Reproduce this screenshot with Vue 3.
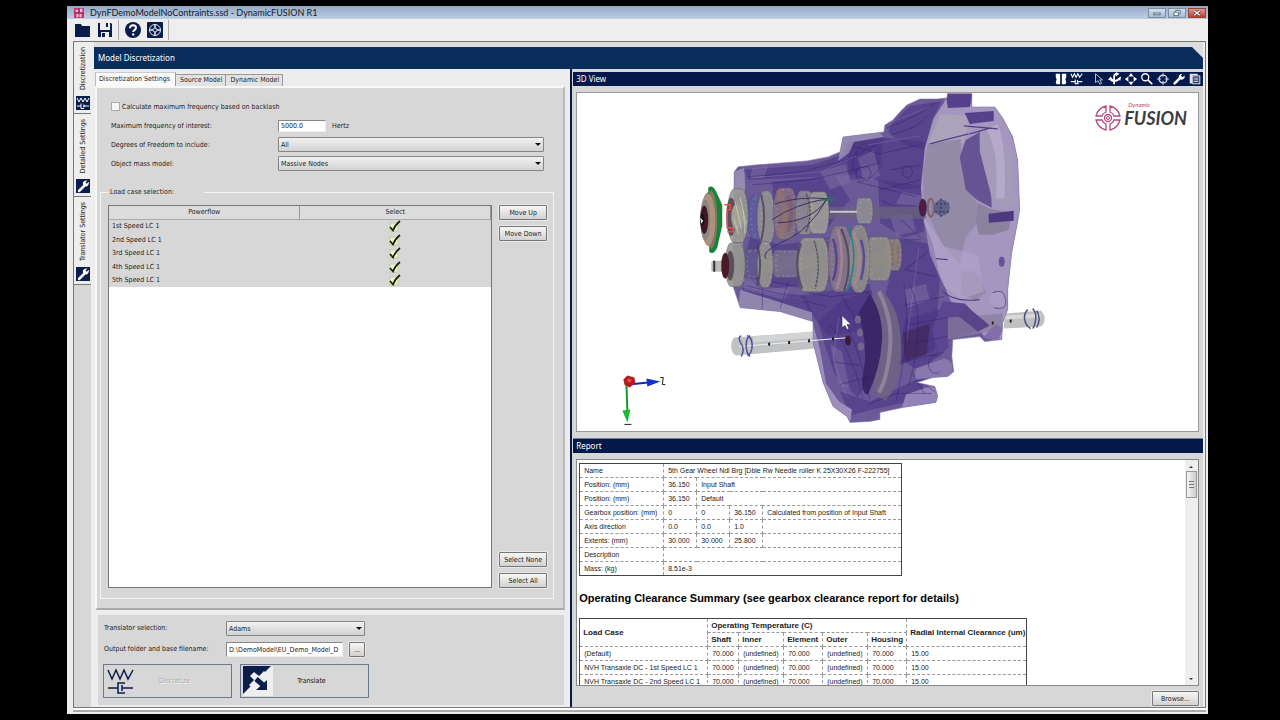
<script setup>
import { ref } from 'vue'

const sideTabs = [
  { label: 'Discretization', icon: 'spring' },
  { label: 'Detailed Settings', icon: 'wrench' },
  { label: 'Translator Settings', icon: 'wrench' },
]
const pageTabs = ['Discretization Settings', 'Source Model', 'Dynamic Model']
const loadCases = ['1st Speed LC 1', '2nd Speed LC 1', '3rd Speed LC 1', '4th Speed LC 1', '5th Speed LC 1']
const frequency = ref('5000.0')
const output = ref('D:\\DemoModel\\EU_Demo_Model_D')

const details = [
  ['Name', ['5th Gear Wheel Ndl Brg [Dble Rw Needle roller K 25X30X26 F-222755]', 4]],
  ['Position: (mm)', ['36.150', 1], ['Input Shaft', 3]],
  ['Position: (mm)', ['36.150', 1], ['Default', 3]],
  ['Gearbox position: (mm)', ['0', 1], ['0', 1], ['36.150', 1], ['Calculated from position of Input Shaft', 1]],
  ['Axis direction', ['0.0', 1], ['0.0', 1], ['1.0', 1], ['', 1]],
  ['Extents: (mm)', ['30.000', 1], ['30.000', 1], ['25.800', 1], ['', 1]],
  ['Description', ['', 4]],
  ['Mass: (kg)', ['8.51e-3', 4]],
]
const clearances = ['(Default)', 'NVH Transaxle DC - 1st Speed LC 1', 'NVH Transaxle DC - 2nd Speed LC 1']
const temps = ['70.000', '(undefined)', '70.000', '(undefined)', '70.000', '15.00']

const housing = 'M734 172L738 167L757 165L807 161L828 157L840 152L843 137L884 132L885 125L893 120L900 112L907 105L920 99L937 99L947 98L948 93H972V107H995L1003 118L1013 137L1018 160L1020 210L1017 227L1012 253L1008 290V310L1003 323L1002 340L985 342L980 337L953 340L952 357L954 372L948 377L933 378L917 383L935 387L938 397L936 403L903 408L880 413V420L870 422L850 423L847 417L833 407L823 383L818 363L813 343V322L780 312L740 308L733 287Z'

/* gear drums: left edge, right edge, centre y, half height, tint */
const gears = [
  [747, 760, 217, 22, '#5d5b9c'], [727, 748, 216, 27, '#98978f'], [757, 775, 218, 27, '#918f94'],
  [773, 797, 214, 26, '#857083'], [795, 814, 213, 22, '#8b8791'], [808, 829, 213, 21, '#9c9c96'],
  [856, 873, 211, 13, '#8e8d93'],
  [743, 760, 264, 15, '#5f588e'], [725, 745, 265, 22, '#94938c'], [772, 800, 264, 14, '#746f8d'], [757, 773, 265, 23, '#95938f'],
  [820, 846, 260, 22, '#5a4d8e'], [797, 829, 265, 27, '#96958d'], [828, 852, 259, 33, '#86748b'],
  [884, 902, 255, 16, '#89807a'], [866, 892, 259, 22, '#8f8e86'], [848, 870, 259, 34, '#8d8b88'],
]
function drum([a, b, y, h]) {
  const r = Math.round(h / 4)
  return `M${a + r} ${y - h}H${b - r}A${r} ${h} 0 0 1 ${b - r} ${y + h}H${a + r}A${r} ${h} 0 0 1 ${a + r} ${y - h}Z`
}
/* darker facets of the translucent casting */
const facets = [
  'M742 170L812 165L842 155L850 142L884 137L880 165L850 175L800 178L748 180Z',
  'M740 235L780 245L820 240L810 285L760 290L742 270Z', 'M742 288L806 296L812 314L782 304L746 301Z',
  'M846 143L880 137L925 142L924 188L900 190L872 178L850 180Z', 'M893 122L910 106L942 101L932 120L925 150L905 145L888 132Z',
  'M878 180L922 186L924 232L904 238L880 223Z', 'M900 238L928 244L940 280L935 350L900 366L884 300Z',
  'M818 322L842 300L872 290L876 370L858 398L835 376L825 346Z', 'M840 392L870 402L925 376L922 400L872 410L850 416Z',
  'M905 320L940 310L949 348L920 372L898 358Z', 'M800 296L870 284L872 330L828 336L814 318Z', 'M772 182L835 176L850 200L826 230L774 226Z',
]
const patches = [
  'M736 174L746 172L744 196L750 236L744 262L736 258Z', 'M752 168L768 166L764 178L750 178Z', 'M858 158L874 150L880 176L864 182Z',
  'M890 216L912 214L916 232L896 236Z', 'M744 262L760 286L790 290L784 300L744 290Z', 'M830 344L842 352L850 390L838 384Z',
  'M902 192L922 196L920 206L896 204Z', 'M904 290L926 284L930 300L908 308Z', 'M820 172L846 164L850 182L830 190Z',
]
const shade = [
  'M748 177L801 172L846 160L876 145M752 185L810 180L849 171L883 162M862 143Q846 166 858 176T882 164M852 146L880 154L919 145M887 128Q919 116 935 103M891 135Q917 129 928 116M857 182L917 197M880 190L921 180M882 201L924 221M890 170L922 165',
  'M742 276L808 289M746 286L827 307M762 310L763 276M780 309L788 282M807 293L831 297L870 292M842 297L855 318M829 325Q850 346 863 399M839 315Q858 339 870 401M831 362L860 366M840 385L875 376',
  'M904 285Q912 330 896 402M910 285Q927 320 909 386M903 306L944 297M909 325L948 318M909 344L948 337M899 363L944 353M912 373L925 395M868 405L896 394L932 394M928 252L905 270L937 277M921 240L904 240M901 220L924 240',
  'M907 166a5 6 0 1 0 1 12a5 6 0 1 0 -1 -12M863 168a5 7 0 1 0 1 12a5 7 0 1 0 -1 -12M939 357a7 9 0 1 0 1 15M924 384L936 393',
]
const axisBeads = [769, 789, 809, 833]
</script>

<template>
  <div class="desktop">
    <main class="window">
      <header class="titlebar">
        <svg class="appicon" viewBox="0 0 12 12" aria-hidden="true"><rect width="12" height="12" fill="#c8386f" /><path d="M2 2h3v3H2zM7 1h3v4H7zM3 7h6v4H3z" fill="#f3c4d6" /><path d="M6 0v12M0 6h12" stroke="#8d1d49" /></svg>
        <h1>DynFDemoModelNoContraints.ssd - DynamicFUSION R1</h1>
        <div class="winbtns">
          <button aria-label="Minimize"><svg viewBox="0 0 16 9"><rect x="4.500" y="4.500" width="7" height="2" fill="#fff" stroke="#4b5b6e" /></svg></button>
          <button aria-label="Restore"><svg viewBox="0 0 16 9"><path d="M6.500 3V1.500h5v4H10M4.500 3.500h5v4h-5z" fill="#fff" stroke="#4b5b6e" /></svg></button>
          <button class="close" aria-label="Close"><svg viewBox="0 0 16 9"><path d="M5 2l6 5M11 2L5 7" stroke="#5a3733" stroke-width="3" /><path d="M5 2l6 5M11 2L5 7" stroke="#fff" stroke-width="1.500" /></svg></button>
        </div>
      </header>

      <nav class="toolbar" aria-label="Main">
        <button aria-label="Open"><svg viewBox="0 0 16 16"><path d="M0 2h6l1 2h8v11H0z" fill="#0b1d4b" /></svg></button>
        <button class="next" aria-label="Save"><svg viewBox="0 0 16 16"><path d="M1 1h13l1 1v13H1z" fill="#0b1d4b" /><path d="M3 1h10v7H3zM4 10h8v5H4z" fill="#eee" /><path d="M9 1h2v4H9zM5 11h3v4H5z" fill="#0b1d4b" /></svg></button>
        <i class="sep"></i>
        <button aria-label="Help"><svg viewBox="0 0 16 16"><circle cx="8" cy="8" r="8" fill="#0b1d4b" /><path d="M5 6.300Q5 3.300 8.200 3.300Q11 3.300 11 5.800Q11 7.200 9.500 8Q8.200 8.800 8.200 10" fill="none" stroke="#fff" stroke-width="2" /><circle cx="8.200" cy="12.400" r="1.200" fill="#fff" /></svg></button>
        <button class="next" aria-label="About"><svg viewBox="0 0 16 16"><rect width="16" height="16" rx="1" fill="#0b1d4b" /><g fill="none" stroke="#dfe3ee"><circle cx="8" cy="8" r="5.500" /><circle cx="8" cy="8" r="2" /><path d="M8 2v4M8 10v4M2 8h4M10 8h4" stroke-width="1.500" /></g></svg></button>
        <i class="sep"></i>
      </nav>

      <div class="body">
        <nav class="side" aria-label="Steps">
          <button v-for="t in sideTabs" :key="t.label" class="sidetab">
            <span>{{ t.label }}</span>
            <svg viewBox="0 0 14 14" aria-hidden="true">
              <rect width="14" height="14" fill="#0b1d4b" />
              <g v-if="t.icon === 'spring'" fill="none" stroke="#fff"><path d="M1 2l2 4 2-4 2 4 2-4 2 4 2-4M1 10h4M5 7.500v5h3M7 10h6M8 8.500v3" /></g>
              <g v-else><path d="M3 12L8 7" stroke="#fff" stroke-width="2.500" stroke-linecap="round" /><path d="M11.500 1.500L9.500 3.500L10.700 4.700L12.800 2.800Q13.500 5.500 11.500 7Q9.800 8 8 7Q6 5.500 7 3.200Q8.500 1 11.500 1.500Z" fill="#fff" /></g>
            </svg>
          </button>
        </nav>

        <div class="work">
          <h2 class="banner">Model Discretization</h2>
          <div class="columns">
            <section class="left">
              <div class="tabs" role="tablist">
                <button v-for="(t, i) in pageTabs" :key="t" role="tab" :class="{ on: i === 0 }" :aria-selected="i === 0">{{ t }}</button>
              </div>
              <div class="page">
                <div class="form">
                  <label class="check"><input type="checkbox"> Calculate maximum frequency based on backlash</label>
                  <label for="freq">Maximum frequency of interest:</label>
                  <div class="unit"><input id="freq" v-model="frequency" type="text"> <span>Hertz</span></div>
                  <label for="dof">Degrees of Freedom to include:</label>
                  <div class="combo"><select id="dof"><option>All</option></select></div>
                  <label for="mass">Object mass model:</label>
                  <div class="combo"><select id="mass"><option>Massive Nodes</option></select></div>
                </div>
                <fieldset>
                  <legend>Load case selection:</legend>
                  <div class="cases">
                    <div class="list">
                      <table>
                        <thead><tr><th>Powerflow</th><th>Select</th></tr></thead>
                        <tbody>
                          <tr v-for="c in loadCases" :key="c">
                            <td>{{ c }}</td>
                            <td class="tick"><svg viewBox="0 0 12 12" role="img" aria-label="Selected"><rect x="1" y="3" width="8" height="8" fill="#edf3c8" stroke="#c3cda2" /><path d="M1 7L4 10.500Q6 5 11 1" fill="none" stroke="#15200d" stroke-width="1.700" /></svg></td>
                          </tr>
                        </tbody>
                      </table>
                    </div>
                    <div class="actions">
                      <button class="btn">Move Up</button><button class="btn">Move Down</button>
                      <i></i>
                      <button class="btn">Select None</button><button class="btn">Select All</button>
                    </div>
                  </div>
                </fieldset>
              </div>
              <div class="translate">
                <div class="trow">
                  <label for="trans">Translator selection:</label>
                  <div class="combo"><select id="trans"><option>Adams</option></select></div>
                </div>
                <div class="trow">
                  <label for="out">Output folder and base filename:</label>
                  <div class="path"><input id="out" v-model="output" type="text"><button class="btn">...</button></div>
                </div>
                <div class="big">
                  <button disabled><svg viewBox="0 0 30 30" aria-hidden="true"><g fill="none" stroke="#0b1d4b" stroke-width="1.500"><path d="M2 4l4 9 4-9 4 9 4-9 4 9 5-9M2 22h10M16 22h11M19 17h-7v10h7M16 19v6" /></g></svg><span>Discretize</span></button>
                  <button><svg viewBox="0 0 30 30" aria-hidden="true"><rect width="30" height="30" fill="#eee" /><path d="M0 0h28L0 28z" fill="#0b1d4b" /><path d="M7 10l4-4 5 4 5-5 4 4-5 5-5 4-5 5-4-4 5-5z" fill="#eee" /><path d="M13 13l7 6" stroke="#0b1d4b" stroke-width="5" /><path d="M24 14v10H13z" fill="#0b1d4b" /></svg><span>Translate</span></button>
                </div>
              </div>
            </section>

            <section class="right">
              <div class="bar">
                <h3>3D View</h3>
                <div class="tools">
                  <button aria-label="Components"><svg viewBox="0 0 16 16"><path d="M2 2h5v6H3L2 6zM9 2h5v4l-1 2H9zM3 8h4v6H3L2 12zM9 8h4l1 4-1 2H9z" fill="#fff" /></svg></button>
                  <button aria-label="Springs"><svg viewBox="0 0 16 16"><path d="M1 2l2 4 2-4 2 4 2-4 2 4 3-4M1 11h5M6 8.500v5h4M8 11h6M8.500 9v4" fill="none" stroke="#fff" stroke-width="1.200" /></svg></button>
                  <button class="gap" aria-label="Pick"><svg viewBox="0 0 16 16"><path d="M4 2v10l3-2 2 4 2-1-2-4h3z" fill="none" stroke="#c8cede" /></svg></button>
                  <button aria-label="Rotate"><svg viewBox="0 0 16 16"><path d="M10 2Q7 2 7 5V14M3 9Q8 12 13 8" fill="none" stroke="#fff" stroke-width="2" /><path d="M9 0l4 2-4 3zM0 9l3-4 3 4zM11 7l4-2-1 5z" fill="#fff" /></svg></button>
                  <button aria-label="Pan"><svg viewBox="0 0 16 16"><path d="M8 1l3 4H5zM8 15l3-4H5zM1 8l4-3v6zM15 8l-4-3v6z" fill="#fff" /></svg></button>
                  <button aria-label="Zoom"><svg viewBox="0 0 16 16"><circle cx="6" cy="6" r="4" fill="none" stroke="#fff" stroke-width="1.500" /><path d="M9 9l5 5" stroke="#fff" stroke-width="2" /></svg></button>
                  <button aria-label="Centre"><svg viewBox="0 0 16 16"><circle cx="8" cy="8" r="4.500" fill="none" stroke="#dde1ec" stroke-width="1.500" /><path d="M8 1v5M8 10v5M1 8h5M10 8h5" stroke="#dde1ec" /></svg></button>
                  <button aria-label="Options"><svg viewBox="0 0 16 16"><path d="M3 13L9 7" stroke="#fff" stroke-width="3" stroke-linecap="round" /><path d="M12 2L10 4l2 2 2.500-2Q15 7 13 8Q11 9.500 8.500 8Q7 6 8 4Q9 2 12 2z" fill="#fff" /></svg></button>
                  <button aria-label="Report"><svg viewBox="0 0 16 16"><path d="M2 2h9v2H5v9H2z" fill="#dfe3ee" /><rect x="5.500" y="4.500" width="8" height="9" fill="#0b1d4b" stroke="#fff" /><path d="M7 7h5M7 9h5M7 11h5" stroke="#fff" /></svg></button>
                </div>
              </div>

              <div class="view">
                <svg class="scene" viewBox="577 93 621 339" role="img" aria-label="Gearbox model">
                  <defs><clipPath id="case"><path :d="housing" /></clipPath></defs>
                  <!-- output shaft -->
                  <path d="M734 338L815 332V349L736 356Q731 354 731 347Q731 341 734 338Z" fill="#c1c2c4" />
                  <path d="M753 337L815 332V338L753 343Z" fill="#d2d3d4" />
                  <path d="M1005 314L1041 311Q1045 314 1045 320Q1044 327 1040 327L1004 329Z" fill="#bfc0bf" />
                  <path d="M1005 316l36-2v4l-36 2z" fill="#d8d8d6" />

                  <path :d="housing" fill="#6a5b98" />
                  <g clip-path="url(#case)">
                    <path v-for="f in facets" :key="f" :d="f" fill="#493584" opacity=".6" />
                    <path v-for="p in patches" :key="p" :d="p" fill="#7d70a3" opacity=".5" />
                    <path d="M734 172l10-4 1 20-3 24 2 70-11 4zM843 137l36-5 5 5-30 5-5 11-11 8z" fill="#a097b8" opacity=".75" />
                    <path d="M740 290L812 313V322L738 310Z" fill="#8f85ad" />
                    <path d="M813 325L820 350L826 384L839 402L852 410L850 424L830 408L811 350Z" fill="#9c8fbd" />
                    <!-- bell housing -->
                    <path d="M948 93h24v14h25l10 16 11 30 4 70-12 60-5 60-20-5-20-30-14-6-12-30-6-28-9-22-3-34 4-40 9-30 10-15z" fill="#a497bf" />
                    <path d="M940 114L971 116L964 143L929 143Z" fill="#aaa3ba" />
                    <path d="M928 144L961 139L962 160L966 188L977 202V224L966 237L960 264L942 245L924 204L923 171Z" fill="#938aa8" />
                    <path d="M966 140L980 132L985 152L991 180L992 208L977 200L966 190L960 157Z" fill="#665394" />
                    <path d="M980 132L1000 137L1013 151L1015 204L1001 207L992 198L980 151Z" fill="#a49bb8" />
                    <path d="M998 124Q1007 146 1005 198L996 199Q1000 150 986 129Z" fill="#bcb1d0" opacity=".7" />
                    <path d="M978 203L990 209L1013 213L1009 230L994 235H979L976 220Z" fill="#8b829e" />
                    <path d="M962 272Q972 268 980 277L986 293L976 300L961 295Z" fill="#9389a7" />
                    <path d="M924 218L945 247L978 255L984 292L960 300L944 286L930 255Z" fill="#b0a5ca" opacity=".6" />
                    <path d="M946 94h27l-3 13-22 1zM965 113l29-2v10l-24 3z" fill="#56428c" />
                    <path d="M989 214l25-3v10l-25 2z" fill="#4d3983" />
                    <path d="M942 291Q953 303 980 300M930 144l19-5 20-5M970 134l21-6M964 126l34 3M936 259l12 1" fill="none" stroke="#543f86" stroke-width="1.200" />
                    <path d="M943 302L965 304L988 328L950 340L940 358L932 330Z" fill="#5c4692" />
                    <path d="M948 318L1003 314V330L948 340Z" fill="#897e9c" opacity=".7" />
                    <path d="M966 306L990 326L978 332L958 316Z" fill="#5a4489" />
                    <circle cx="998" cy="300" r="8" fill="#aa9dc4" /><path d="M993 293Q1004 288 1006 300T994 308" fill="none" stroke="#62508f" />
                    <ellipse cx="1002" cy="262" rx="3" ry="5" fill="#67529a" />
                    <path d="M983 338L996 325L1003 329L999 341Z" fill="#816fa9" />
                    <!-- bosses -->
                    <path d="M916 369L944 359Q954 361 953 370T944 377L915 380Z" fill="#8878ae" />
                    <path d="M906 395L930 387Q939 388 938 397T932 404L902 408Z" fill="#9282b7" />
                    <path d="M878 288Q904 306 901 362Q899 386 886 401Q874 398 873 382Q886 345 873 308Z" fill="#6d6284" />
                    <path d="M870 294Q884 316 882 343T868 395Q862 395 862 380Q870 348 858 315Z" fill="#3b2768" />
                    <path d="M879 292Q893 320 890 350T879 393" fill="none" stroke="#a29aa8" stroke-width="4" opacity=".6" />
                    <path d="M903 333L930 324L927 355L905 361Z" fill="#402759" opacity=".7" />
                    <path v-for="s in shade" :key="s" :d="s" fill="none" stroke="#2e1c68" stroke-width="1" opacity=".4" />
                    <path d="M751 178L821 172L856 156M868 145L920 136M892 122L930 107M839 317L833 360L847 398M752 289L806 301M919 248L907 340" fill="none" stroke="#a18fc9" stroke-width="1" opacity=".3" />
                  </g>
                  <path :d="housing" fill="none" stroke="#867ba8" stroke-width="1" opacity=".6" />

                  <!-- shafts -->
                  <path d="M745 207H926V219H745Z" fill="#69627f" opacity=".8" />
                  <path d="M738 258L900 252V263L740 274Z" fill="#77727f" opacity=".8" />
                  <g v-for="(g, i) in gears" :key="i">
                    <path :d="drum(g)" :fill="g[4]" opacity=".9" />
                    <path :d="drum([g[0] + 4, g[1] - 1, g[2], g[3] - 2])" fill="none" stroke="#c4c3b8" stroke-width="2" stroke-dasharray="1 4" opacity=".35" />
                    <path :d="drum(g)" fill="none" stroke="#4e4666" stroke-width="1" opacity=".35" />
                  </g>
                  <ellipse cx="731" cy="217" rx="5" ry="19" fill="#4a3c52" opacity=".8" /><ellipse cx="737" cy="217" rx="6" ry="13" fill="#a3a18f" />
                  <ellipse cx="730" cy="266" rx="4" ry="15" fill="#4a3c4c" opacity=".8" />
                  <path d="M801 244Q793 265 802 289M841 229Q855 259 844 291M757 245Q763 266 757 286M761 195Q767 217 761 241" fill="none" stroke="#4b4153" stroke-width="2" opacity=".8" />
                  <path d="M814 241Q822 264 815 289M806 194Q814 213 806 232" fill="none" stroke="#5a5262" stroke-width="1.500" stroke-dasharray="3 1" />
                  <path d="M848 226Q860 257 847 292" fill="none" stroke="#238086" stroke-width="1.500" />
                  <path d="M838 230Q846 260 837 289M853 231Q865 259 854 287" fill="none" stroke="#a98790" stroke-width="3" opacity=".8" />
                  <path d="M833 239Q840 258 833 281M861 240Q867 258 861 280" fill="none" stroke="#443098" stroke-width="2.500" opacity=".7" />
                  <path d="M778 190Q790 213 780 238" fill="none" stroke="#98755f" stroke-width="5" opacity=".6" />
                  <path d="M788 196Q794 213 788 232" fill="none" stroke="#7a5a62" stroke-width="4" opacity=".6" />
                  <path d="M735 202l6 26M740 198l6 27M743 210l2 24M734 219l4 15" stroke="#d5d3cd" stroke-width="1" opacity=".7" />
                  <path d="M724 205h6v5h-3v18h6v4h-6" fill="none" stroke="#e95046" stroke-width="1.500" />
                  <path d="M827 199Q801 196 775 204M827 199Q795 204 772 220M827 199Q812 222 778 223M827 199Q810 230 785 241T766 259" fill="none" stroke="#3b305f" stroke-width="1" />
                  <path d="M822 200h13M828 197l4 6" stroke="#217b55" stroke-width="1.500" />
                  <path d="M830 212h27" stroke="#c8c5cd" stroke-width="2" />
                  <!-- end wheel -->
                  <ellipse cx="709" cy="219" rx="9" ry="27" fill="#998b7c" />
                  <path d="M708 188Q712 184 716 192L722 205V226L717 248Q713 256 709 252Z" fill="#188237" />
                  <ellipse cx="711" cy="220" rx="6" ry="29" fill="#7d7966" />
                  <ellipse cx="708" cy="220" rx="7" ry="26" fill="#aa927d" />
                  <ellipse cx="705" cy="220" rx="5" ry="20" fill="#8f8484" />
                  <ellipse cx="704" cy="220" rx="4" ry="14" fill="#401621" />
                  <ellipse cx="702" cy="220" rx="2" ry="6" fill="#111" /><path d="M700 218l3 3-2 3z" fill="#eee" />
                  <rect x="711" y="261" width="13" height="11" rx="2" fill="#bcbcbb" /><path d="M714 261v11" stroke="#333" stroke-width="2" />
                  <ellipse cx="725" cy="266" rx="4" ry="13" fill="#491b29" />
                  <!-- input bearing -->
                  <ellipse cx="923" cy="208" rx="4" ry="9" fill="#4c1e43" /><ellipse cx="931" cy="208" rx="3" ry="9" fill="none" stroke="#806370" stroke-width="2" />
                  <circle cx="942" cy="208" r="8" fill="#626087" /><path d="M936 204h13M935 212h15M941 199v18" stroke="#3f456c" stroke-width="2" stroke-dasharray="2 2" />
                  <path d="M893 243v25M898 246v19" stroke="#94634f" stroke-width="2" stroke-dasharray="3 2" opacity=".6" />
                  <!-- shaft marks -->
                  <path d="M739 347l110-9" stroke="#eee" stroke-width="1" /><path v-for="x in axisBeads" :key="x" :d="`M${x} ${406 - 9 * x / 110}v3`" stroke="#222" stroke-width="2" />
                  <path d="M741 336q-4 2 0 8t0 13M750 336q-4 2-4 10t4 11M747 336q5 2 5 10t-5 10" fill="none" stroke="#51519b" stroke-width="1.500" />
                  <path d="M1028 310q-4 4-3 10t6 9M1033 309q4 4 3 11t-3 9M1037 311q5 8 0 17" fill="none" stroke="#4f5185" stroke-width="1.500" />
                  <path d="M993 322v3M1011 320v3" stroke="#222" stroke-width="2" />
                  <g fill="#76658b"><ellipse cx="858" cy="320" rx="3" ry="4" /><ellipse cx="860" cy="333" rx="3" ry="4" /><ellipse cx="861" cy="347" rx="3" ry="4" /><ellipse cx="848" cy="341" rx="3" ry="5" fill="#37203f" /></g>
                  <path d="M842 316v12l3-2 2 4 2-1-2-4h4z" fill="#fff" stroke="#463b67" stroke-width=".7" />

                  <!-- axis triad -->
                  <path d="M626 384l1 28" stroke="#149b29" stroke-width="2" /><path d="M622 411l8-1-3 13z" fill="#1cba31" />
                  <path d="M628 385l20-2" stroke="#1429aa" stroke-width="2" /><path d="M646 379l14 3-13 5z" fill="#1430d1" />
                  <path d="M623 380l4-4 7 2 1 6-6 4-5-3z" fill="#b31b22" /><circle cx="629" cy="381" r="2" fill="#e84f4a" />
                  <path d="M660 378h3l-1 7h3M624 425h7" fill="none" stroke="#222" />
                </svg>
                <div class="logo">
                  <svg viewBox="0 0 26 26" aria-hidden="true"><g fill="none" stroke="#b34a7b" stroke-width="1.300"><circle cx="13" cy="13" r="3.500" /><circle cx="13" cy="13" r="1.500" stroke-width="1" /><path d="M11 1Q3 3 1 11h6q1-3 4-4zM15 1q8 2 10 10h-6q-1-3-4-4zM1 15q2 8 10 10v-6q-3-1-4-4zM25 15q-2 8-10 10v-6q3-1 4-4z" /></g></svg>
                  <p><small>Dynamic</small><b>FUSION</b></p>
                </div>
              </div>

              <div class="bar report-bar"><h3>Report</h3></div>
              <div class="report">
                <div class="doc">
                  <table class="t1">
                    <colgroup><col class="w84"><col class="w33"><col class="w33"><col class="w33"><col></colgroup>
                    <tbody>
                      <tr v-for="(r, i) in details" :key="i">
                        <td>{{ r[0] }}</td>
                        <td v-for="(c, j) in r.slice(1)" :key="j" :colspan="c[1]">{{ c[0] }}</td>
                      </tr>
                    </tbody>
                  </table>
                  <h4>Operating Clearance Summary (see gearbox clearance report for details)</h4>
                  <table class="t2">
                    <colgroup><col class="w128"><col class="w31"><col class="w45"><col class="w39"><col class="w45"><col class="w39"><col></colgroup>
                    <thead>
                      <tr><th rowspan="2">Load Case</th><th colspan="5">Operating Temperature (C)</th><th rowspan="2">Radial Internal Clearance (um)</th></tr>
                      <tr><th>Shaft</th><th>Inner</th><th>Element</th><th>Outer</th><th>Housing</th></tr>
                    </thead>
                    <tbody>
                      <tr v-for="c in clearances" :key="c"><td>{{ c }}</td><td v-for="(t, i) in temps" :key="i">{{ t }}</td></tr>
                    </tbody>
                  </table>
                </div>
                <div class="scroll">
                  <button aria-label="Scroll up"><svg viewBox="0 0 10 10"><path d="M3 7l2-2 2 2z" fill="#333" /></svg></button>
                  <i></i>
                  <button aria-label="Scroll down"><svg viewBox="0 0 10 10"><path d="M3 4l2 2 2-2z" fill="#333" /></svg></button>
                </div>
              </div>
              <div class="foot"><button class="btn">Browse...</button></div>
            </section>
          </div>
        </div>
      </div>
    </main>
  </div>
</template>

<style>
body { margin: 0; background: #000; }
</style>

<style scoped>
* { box-sizing: border-box; }
h1, h2, h3, h4, p { margin: 0; font-weight: 400; }
button, input, select { font: inherit; color: inherit; margin: 0; padding: 0; border-radius: 0; }
button { background: none; border: 0; }
svg { display: block; }
.desktop { height: 100vh; padding: 6px 72px 6px 67px; background: #000; font: 7px/10px "DejaVu Sans Condensed", "DejaVu Sans", sans-serif; color: #222; }
.window { height: 100%; display: flex; flex-direction: column; background: #ededed; overflow: hidden; }
.titlebar { display: flex; align-items: center; height: 13px; flex: none; padding: 0 2px 0 7px; background: linear-gradient(#94a9c4, #bdcfe6); }
.appicon { width: 10px; height: 10px; }
.titlebar h1 { margin-left: 6px; font: 9px/12px Lato, sans-serif; flex: 1; color: #16202c; }
.winbtns { display: flex; gap: 2px; }
.winbtns button { width: 18px; height: 10px; border: 1px solid #7c8ca0; background: linear-gradient(#d3deeb, #a9bcd3); }
.winbtns .close { border-color: #8d473e; background: linear-gradient(#dc9a8e, #b8412f); }
.winbtns svg { width: 16px; height: 8px; }
.toolbar { display: flex; align-items: center; height: 22px; flex: none; padding-left: 8px; background: #eee; }
.toolbar button, .toolbar svg { width: 16px; height: 16px; }
.toolbar .next { margin-left: 6px; }
.sep { width: 1px; height: 20px; background: #aaa; margin: 0 6px 0 5px; }
.body { flex: 1; min-height: 0; display: flex; margin: 0 2px 6px 6px; border: 1px solid #777; box-shadow: 0 2px 0 #fff, 0 4px 0 #aaa; background: #efefef; padding-right: 2px; }
.side { width: 20px; flex: none; background: #d7d7d7; border-right: 3px solid #eee; }
.sidetab { display: flex; flex-direction: column; align-items: center; gap: 6px; width: 17px; padding: 5px 0 3px; background: #eee; border-bottom: 1px solid #777; }
.sidetab span { writing-mode: vertical-rl; transform: rotate(180deg); line-height: 12px; }
.sidetab svg { width: 14px; height: 14px; }
.work { flex: 1; min-width: 0; display: flex; flex-direction: column; padding-top: 5px; background: #ddd; }
.banner { flex: none; height: 22px; line-height: 22px; padding-left: 4px; font-family: "Noto Sans", sans-serif; font-size: 8px; color: #fff; background: #0b2d5c; clip-path: polygon(0 0, calc(100% - 11px) 0, 100% 11px, 100% 100%, 0 100%); }
.columns { flex: 1; min-height: 0; display: flex; }
.left { flex: 474 1 0; min-width: 0; display: flex; flex-direction: column; padding: 3px 5px 2px 1px; background: #ededed; border-right: 2px solid #0b1746; }
.tabs { display: flex; align-items: flex-end; height: 14px; flex: none; }
.tabs button { height: 12px; padding: 0 3px 0 4px; line-height: 11px; border: 1px solid #999; border-left-width: 0; border-bottom: 0; background: #e2e2e2; white-space: nowrap; }
.tabs .on { height: 14px; padding: 0 5px 0 3px; background: #fafafa; border-left: 1px solid #bbb; border-top-color: #ccc; }
.page { flex: 1; min-height: 0; display: flex; flex-direction: column; background: #d7d7d7; border: 2px solid #f7f7f7; border-bottom-color: #aaa; border-right-color: #bbb; padding: 9px 9px 9px 3px; }
.form { display: grid; grid-template-columns: 158px 1fr; grid-auto-rows: 19px; align-items: center; padding: 0 10px 0 11px; column-gap: 9px; }
.form > label { line-height: 12px; }
.check { grid-column: 1 / -1; display: flex; align-items: center; gap: 2px; }
.check input { appearance: none; width: 9px; height: 9px; border: 1px solid #aaa; background: #f5f5f5; }
.unit { display: flex; align-items: center; gap: 6px; }
.unit input { width: 48px; height: 12px; padding: 0 2px; border: 1px solid #888; border-right-color: #eee; border-bottom-color: #eee; background: #fff; }
.combo { position: relative; height: 15px; }
.combo select { appearance: none; display: block; width: 100%; height: 15px; padding: 0 2px; border: 1px solid #858585; border-radius: 1px; background: linear-gradient(#f2f2f2, #d2d2d2); }
.combo::after { content: ""; position: absolute; right: 3px; top: 6px; border: 3px solid transparent; border-top-color: #111; border-bottom: 0; }
fieldset { flex: 1; min-height: 0; margin: 14px 0 0; padding: 8px 6px 10px 7px; border: 1px solid #f4f4f4; min-width: 0; display: flex; flex-direction: column; }
legend { padding: 0 30px 0 2px; line-height: 10px; }
.cases { flex: 1; min-height: 0; display: flex; gap: 7px; }
.list { flex: 1; background: #fff; border: 1px solid #777; }
.list table { width: 100%; height: 81px; border-collapse: collapse; table-layout: fixed; background: #d7d7d7; }
.list th { height: 13px; padding: 0; font-weight: 400; border-right: 1px solid #999; border-bottom: 1px solid #aaa; background: #dcdcdc; }
.list td { padding: 0 3px; line-height: 10px; }
.tick svg { width: 12px; height: 12px; margin: 0 auto; }
.actions { width: 48px; display: flex; flex-direction: column; gap: 6px; }
.actions i { flex: 1; }
.btn { height: 15px; flex: none; border: 1px solid #777; border-radius: 1px; background: linear-gradient(#f6f6f6, #d2d2d2); box-shadow: 0 0 0 1px #e8e8e8; white-space: nowrap; }
.translate { flex: none; margin: 5px 1px 0 3px; padding: 6px 5px 7px; background: #d7d7d7; }
.trow { display: grid; grid-template-columns: 123px 139px; height: 21px; align-items: start; }
.trow label { line-height: 14px; padding-left: 1px; }
.path { display: flex; gap: 6px; height: 15px; }
.path input { flex: 1; min-width: 0; padding: 0 2px; border: 1px solid #888; border-right-color: #eee; border-bottom-color: #eee; background: #fff; }
.path .btn { width: 16px; }
.big { display: flex; gap: 8px; margin-top: 1px; }
.big button { width: 129px; height: 34px; display: flex; align-items: center; padding-left: 2px; border: 1px solid #6d7890; color: #111; }
.big svg { width: 30px; height: 30px; flex: none; }
.big span { flex: 1; text-align: center; padding-right: 18px; }
.big button:disabled { color: #aaa; text-shadow: 1px 1px 0 #f5f5f5; }
.right { flex: 635 1 0; min-width: 0; display: flex; flex-direction: column; padding: 3px 0 1px 1px; background: #d7d7d7; }
.bar { flex: none; display: flex; align-items: center; justify-content: space-between; height: 14px; padding-left: 3px; background: #04194a; color: #fff; }
.bar h3 { font-family: "Noto Sans", sans-serif; font-size: 8px; line-height: 14px; }
.tools { display: flex; }
.tools button { width: 16px; height: 14px; display: grid; place-items: center; }
.tools .gap { margin-left: 6px; }
.tools svg { width: 14px; height: 14px; }
.view { position: relative; flex: 342 1 0; min-height: 0; margin: 6px 4px 6px 3px; border: 1px solid #999; background: #fff; }
.scene { width: 100%; height: 100%; }
.logo { position: absolute; right: 11px; top: 6px; display: flex; align-items: center; gap: 3px; }
.logo svg { width: 26px; height: 26px; margin-top: 6px; }
.logo p { display: flex; flex-direction: column; font-family: Lato, "Noto Sans", sans-serif; font-style: italic; }
.logo small { font-size: 6px; line-height: 6px; color: #c03a6e; padding-left: 4px; }
.logo b { font-size: 18px; line-height: 20px; color: #3c3c40; }
.report-bar { height: 15px; border-top: 1px solid #6f8297; }
.report { flex: 227 1 0; min-height: 0; display: flex; margin: 6px 4px 0 3px; border: 1px solid #888; background: #fff; overflow: hidden; }
.doc { flex: 1; min-width: 0; padding: 3px 2px 0; overflow: hidden; font-family: "Liberation Sans", Arial, sans-serif; }
.doc table { border-collapse: collapse; table-layout: fixed; border: 1px solid #444; }
.doc td, .doc th { height: 14px; padding: 0 4px; line-height: 10px; text-align: left; border: 1px dashed #999; white-space: nowrap; }
.doc th { font-size: 8px; padding: 0 0 0 3px; }
.t1 { width: 323px; }
.t2 { width: 448px; }
.w84 { width: 84px; } .w33 { width: 33px; } .w128 { width: 128px; } .w31 { width: 31px; } .w45 { width: 45px; } .w39 { width: 39px; }
.doc h4 { margin: 15px 0 13px; font-size: 11px; line-height: 14px; font-weight: 700; color: #000; white-space: nowrap; }
.scroll { width: 13px; display: flex; flex-direction: column; background: #eee; padding: 1px; }
.scroll button, .scroll svg { width: 10px; height: 10px; }
.scroll i { display: block; height: 27px; margin-bottom: auto; border: 1px solid #999; background: linear-gradient(#777, #777) center 9px / 5px 1px no-repeat, linear-gradient(#777, #777) center 12px / 5px 1px no-repeat, linear-gradient(#777, #777) center 15px / 5px 1px no-repeat, linear-gradient(90deg, #f5f5f5, #ccc); }
.foot { flex: none; display: flex; justify-content: flex-end; padding: 5px 4px 0 0; height: 20px; }
.foot .btn { width: 47px; }
</style>
